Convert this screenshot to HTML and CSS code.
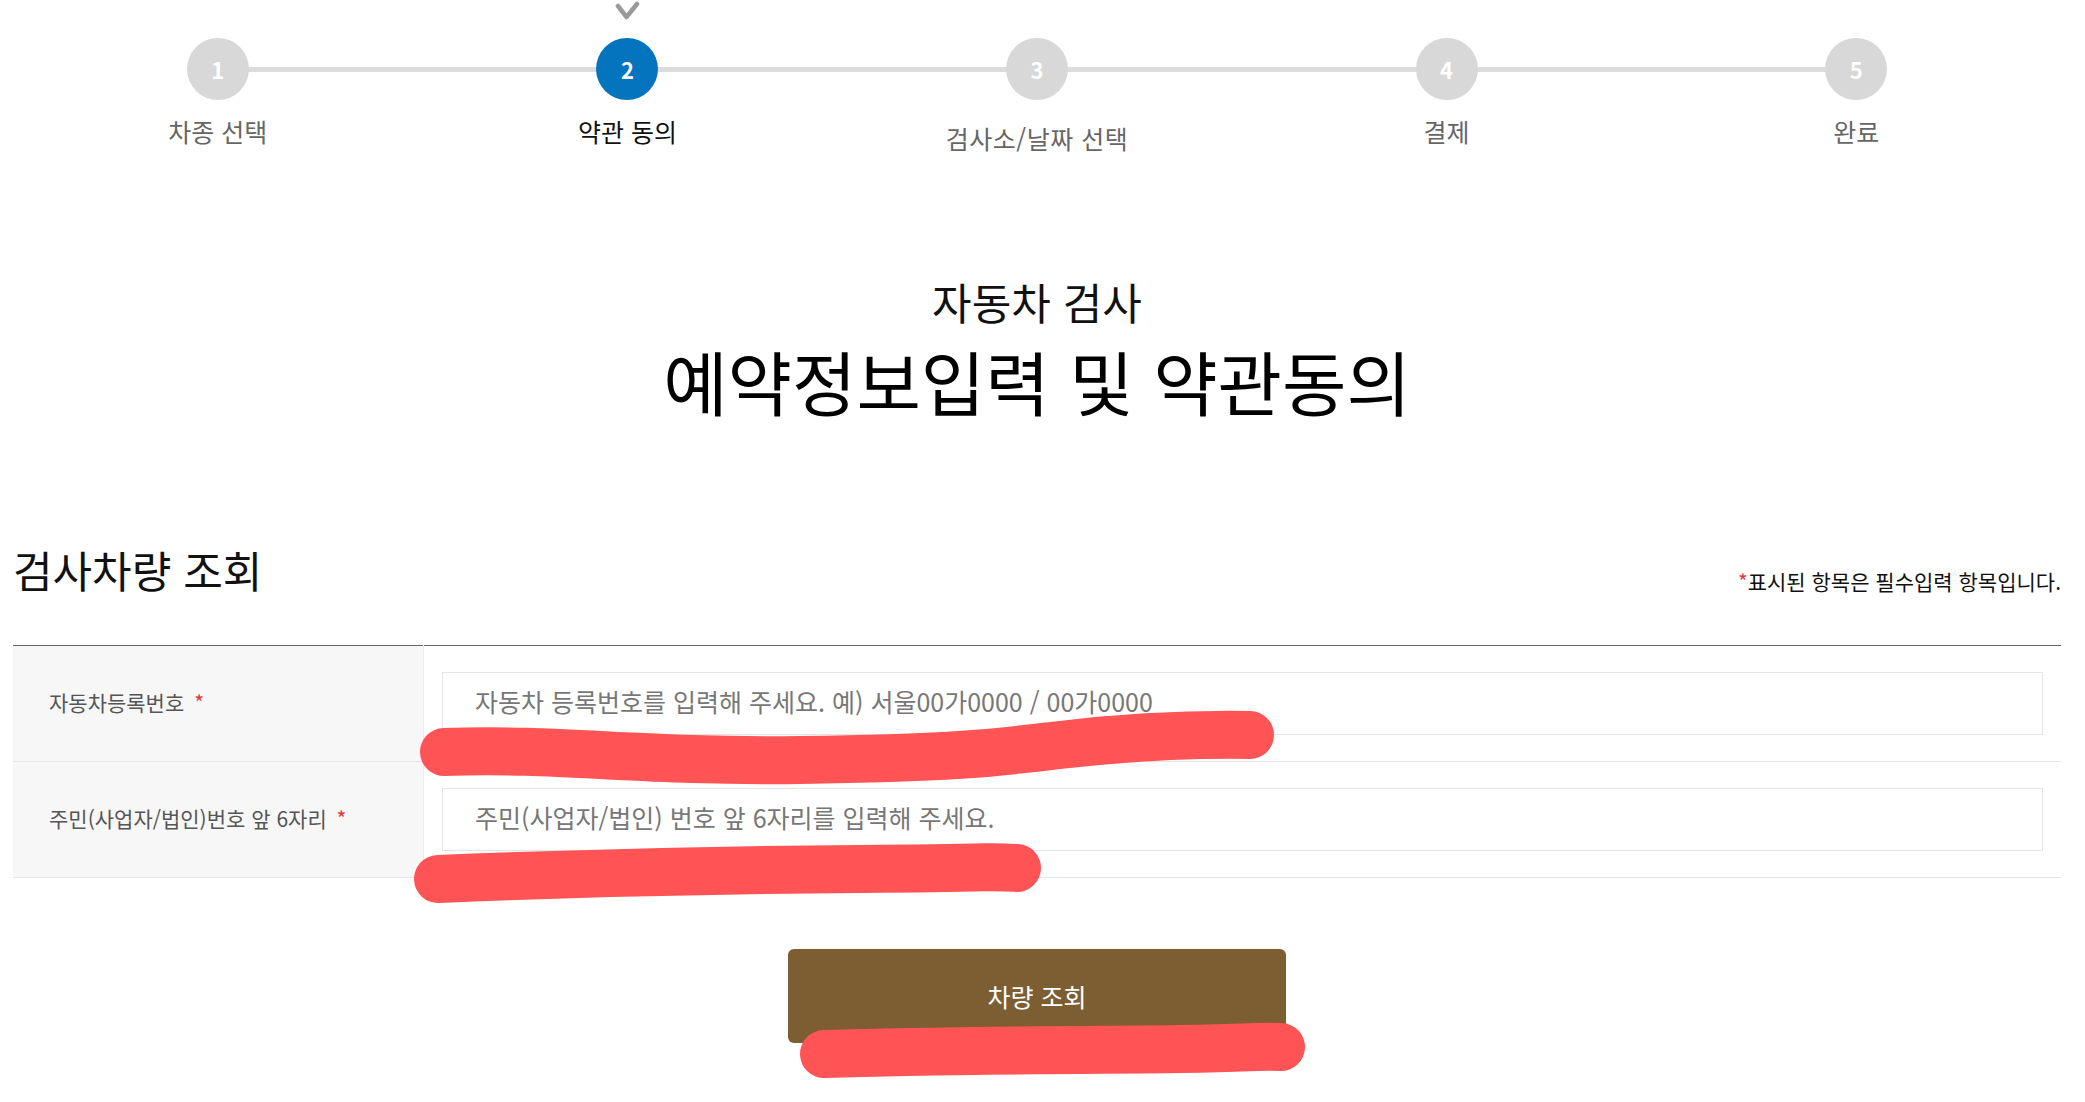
FILE: index.html
```html
<!DOCTYPE html>
<html lang="ko">
<head>
  <meta charset="UTF-8">
  <meta name="viewport" content="width=device-width, initial-scale=1.0">
  <title>자동차 검사 - 예약정보입력 및 약관동의</title>
  <link rel="stylesheet" href="styles.css">
</head>
<body>

  <div class="page">
    <ol class="steps">
      <li class="step">
        <span class="step-check"></span>
        <span class="step-num">1</span>
        <span class="step-label">차종 선택</span>
      </li>
      <li class="step step--active">
        <span class="step-check">
          <svg width="26" height="20" viewBox="0 0 26 20"><polyline points="4,5 12.5,16 23,3" fill="none" stroke="#9a9a9a" stroke-width="4.5" stroke-linecap="round" stroke-linejoin="round"/></svg>
        </span>
        <span class="step-num">2</span>
        <span class="step-label">약관 동의</span>
      </li>
      <li class="step">
        <span class="step-check"></span>
        <span class="step-num">3</span>
        <span class="step-label step-label--low">검사소/날짜 선택</span>
      </li>
      <li class="step">
        <span class="step-check"></span>
        <span class="step-num">4</span>
        <span class="step-label">결제</span>
      </li>
      <li class="step">
        <span class="step-check"></span>
        <span class="step-num">5</span>
        <span class="step-label">완료</span>
      </li>
    </ol>

    <div class="title-block">
      <p class="title-sub">자동차 검사</p>
      <h1 class="title-main">예약정보입력 및 약관동의</h1>
    </div>

    <div class="section-head">
      <h2>검사차량 조회</h2>
      <p class="req-note"><span class="req">*</span>표시된 항목은 필수입력 항목입니다.</p>
    </div>

    <table class="form-table">
      <tr>
        <th><label for="carNo">자동차등록번호</label> <span class="req">*</span></th>
        <td><input type="text" id="carNo" placeholder="자동차 등록번호를 입력해 주세요. 예) 서울00가0000 / 00가0000"></td>
      </tr>
      <tr>
        <th><label for="birth">주민(사업자/법인)번호 앞 6자리</label> <span class="req">*</span></th>
        <td><input type="text" id="birth" maxlength="6" placeholder="주민(사업자/법인) 번호 앞 6자리를 입력해 주세요."></td>
      </tr>
    </table>

    <div class="actions">
      <button class="btn-search">차량 조회</button>
    </div>
  </div>

  <svg class="scribbles" width="2085" height="1102" viewBox="0 0 2085 1102">
    <path d="M444 752 C 560 748, 640 762, 800 760 S 1000 752, 1060 745 S 1180 734, 1250 735" />
    <path d="M438 879 C 560 874, 700 870, 860 869 S 980 866, 1017 868" />
    <path d="M824 1054 C 950 1050, 1100 1050, 1180 1049 S 1250 1046, 1281 1047" />
  </svg>

</body>
</html>
```

FILE: styles.css
```css
body {
  margin: 0;
  font-family: "Noto Sans CJK KR", "Noto Sans", sans-serif;
  color: #111;
  background-color: #fff;
}

.page {
  width: 2048px;
  margin-left: 13px;
}

/* step indicator */
.steps {
  position: relative;
  display: grid;
  grid-template-columns: repeat(5, 1fr);
  list-style: none;
  margin: 0;
  padding: 0;
}

.steps::before {
  content: "";
  position: absolute;
  left: 10%;
  right: 10%;
  top: 67px;
  height: 5px;
  background-color: #dcdcdc;
}

.step {
  display: flex;
  flex-direction: column;
  align-items: center;
}

.step-check {
  height: 24px;
}

.step-check svg {
  display: block;
  margin-top: 1px;
}

.step-num {
  position: relative;
  width: 62px;
  height: 62px;
  margin-top: 14px;
  border-radius: 50%;
  background-color: #d8d8d8;
  color: #fff;
  font-size: 22px;
  font-weight: bold;
  display: flex;
  align-items: center;
  justify-content: center;
}

.step-label {
  margin-top: 16px;
  font-size: 25px;
  line-height: 30px;
  color: #666;
}

.step-label--low {
  padding-top: 7px;
  letter-spacing: 0.5px;
}

.step--active .step-num {
  background-color: #0574bf;
}

.step--active .step-label {
  color: #111;
}

/* page title */
.title-block {
  margin-top: 123px;
  text-align: center;
}

.title-sub {
  margin: 0;
  font-size: 43px;
  line-height: 50px;
  color: #111;
}

.title-main {
  margin: 12px 0 0;
  font-size: 70px;
  line-height: 86px;
  font-weight: normal;
  color: #000;
}

/* section */
.section-head {
  display: flex;
  justify-content: space-between;
  align-items: flex-end;
  margin-top: 117px;
  margin-bottom: 48px;
}

.section-head h2 {
  margin: 0;
  font-size: 43px;
  line-height: 56px;
  font-weight: normal;
  color: #111;
}

.req-note {
  margin: 0 0 2px;
  font-size: 21px;
  line-height: 28px;
  color: #111;
}

.req {
  color: #e0393e;
}

.form-table {
  width: 100%;
  border-collapse: collapse;
  border-top: 1px solid #666;
}

.form-table tr {
  border-bottom: 1px solid #e6e6e6;
}

.form-table th {
  width: 374px;
  padding: 0 0 4px 36px;
  background-color: #f7f7f7;
  border-right: 1px solid #ececec;
  text-align: left;
  font-size: 21px;
  font-weight: normal;
  color: #555;
}

.form-table th .req {
  margin-left: 4px;
}

.form-table td {
  padding: 26px 18px;
}

.form-table input {
  display: block;
  box-sizing: border-box;
  width: 100%;
  height: 63px;
  padding: 0 32px 5px;
  border: 1px solid #e4e4e4;
  font-family: inherit;
  font-size: 25px;
  color: #333;
}

.form-table input::placeholder {
  color: #777;
}

.actions {
  display: flex;
  justify-content: center;
  margin-top: 71px;
}

.btn-search {
  width: 498px;
  height: 94px;
  border: none;
  border-radius: 6px;
  background-color: #7c5e32;
  color: #fff;
  font-family: inherit;
  font-size: 25px;
  cursor: pointer;
}

/* red marker strokes over the screenshot */
.scribbles {
  position: absolute;
  top: 0;
  left: 0;
  pointer-events: none;
}

.scribbles path {
  fill: none;
  stroke: #ff5455;
  stroke-width: 48;
  stroke-linecap: round;
  stroke-linejoin: round;
}
```
